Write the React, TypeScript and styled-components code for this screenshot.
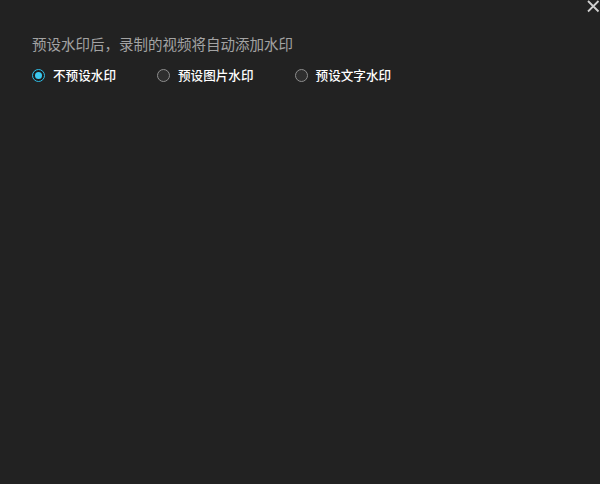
import React, { useState } from "react";
import styled, { createGlobalStyle } from "styled-components";

const Global = createGlobalStyle`
  html, body { margin: 0; padding: 0; background: #222222; }
  body { font-family: "Noto Sans CJK SC", "Noto Sans", sans-serif; }
`;

const Panel = styled.div`
  width: 600px;
  height: 484px;
  background: #222222;
  display: flex;
  flex-direction: column;
  box-sizing: border-box;
`;

const TopBar = styled.div`
  display: flex;
  justify-content: flex-end;
  height: 14px;
`;

const CloseButton = styled.button`
  width: 14px;
  height: 14px;
  padding: 0;
  border: none;
  background: transparent;
  cursor: pointer;
  display: flex;
  align-items: flex-start;
  justify-content: flex-start;
  svg { display: block; }
`;

const Content = styled.div`
  padding: 20px 32px 0 32px;
  display: flex;
  flex-direction: column;
`;

const Title = styled.div`
  color: #a3a3a3;
  font-size: 14.5px;
  line-height: 20px;
`;

const Options = styled.div`
  display: flex;
  align-items: center;
  gap: 41px;
  margin-top: 13px;
`;

const Option = styled.label`
  display: flex;
  align-items: center;
  gap: 8px;
  cursor: pointer;
`;

const Radio = styled.span<{ $checked: boolean }>`
  width: 13px;
  height: 13px;
  box-sizing: border-box;
  border-radius: 50%;
  border: 1.5px solid ${(p) => (p.$checked ? "#2fbde6" : "#8e8e8e")};
  background: ${(p) => (p.$checked ? "#1c1c1c" : "#2e2e2e")};
  display: flex;
  align-items: center;
  justify-content: center;
  &::after {
    content: "";
    width: 7px;
    height: 7px;
    border-radius: 50%;
    background: #3cc8ee;
    display: ${(p) => (p.$checked ? "block" : "none")};
  }
`;

const Label = styled.span`
  color: #ffffff;
  font-size: 12.6px;
  line-height: 16px;
  font-weight: 500;
`;

const options = ["不预设水印", "预设图片水印", "预设文字水印"];

export default function App() {
  const [sel, setSel] = useState(0);
  return (
    <>
      <Global />
      <Panel>
        <TopBar>
          <CloseButton aria-label="关闭">
            <svg width="14" height="14" viewBox="0 0 14 14">
              <path d="M2 1 L12.5 11.5 M12.5 1 L2 11.5" stroke="#cfcfcf" strokeWidth="1.8" fill="none" />
            </svg>
          </CloseButton>
        </TopBar>
        <Content>
          <Title>预设水印后，录制的视频将自动添加水印</Title>
          <Options>
            {options.map((o, i) => (
              <Option key={o} onClick={() => setSel(i)}>
                <Radio $checked={sel === i} />
                <Label>{o}</Label>
              </Option>
            ))}
          </Options>
        </Content>
      </Panel>
    </>
  );
}
